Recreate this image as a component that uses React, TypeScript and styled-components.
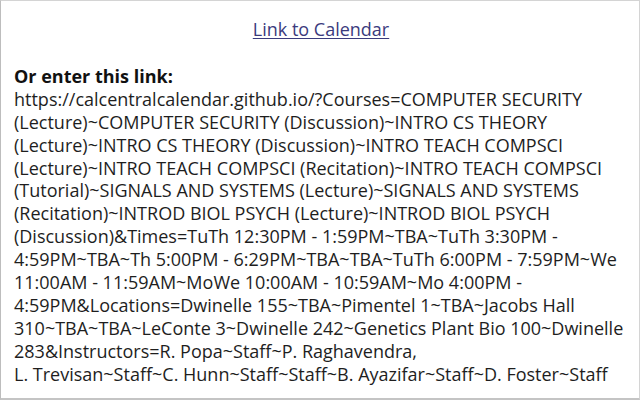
import React from "react";
import styled, { createGlobalStyle } from "styled-components";

const GlobalStyle = createGlobalStyle`
  html, body {
    margin: 0;
    padding: 0;
    background: #ffffff;
  }
  * {
    box-sizing: border-box;
  }
`;

const Popup = styled.div`
  width: 640px;
  height: 400px;
  border: 1px solid #d4d4d4;
  border-left-color: #bdbdbd;
  border-bottom: 2px solid #c4c4c4;
  background: #fff;
  font-family: "Open Sans", "Noto Sans", sans-serif;
  font-size: 18px;
  line-height: 22.9px;
  color: #1e1e1e;
  padding: 17px 11px 0 13px;
  overflow: hidden;
`;

const LinkRow = styled.div`
  display: flex;
  justify-content: center;
`;

const CalendarLink = styled.a`
  color: #3b3b7d;
  text-decoration: underline;
  text-underline-offset: 2px;
  cursor: pointer;
`;

const Section = styled.div`
  margin-top: 24px;
`;

const Label = styled.div`
  font-weight: 700;
  color: #111;
`;

const Url = styled.div`
  overflow-wrap: anywhere;
`;

const url =
  "https://calcentralcalendar.github.io/?Courses=COMPUTER SECURITY (Lecture)~COMPUTER SECURITY (Discussion)~INTRO CS THEORY (Lecture)~INTRO CS THEORY (Discussion)~INTRO TEACH COMPSCI (Lecture)~INTRO TEACH COMPSCI (Recitation)~INTRO TEACH COMPSCI (Tutorial)~SIGNALS AND SYSTEMS (Lecture)~SIGNALS AND SYSTEMS (Recitation)~INTROD BIOL PSYCH (Lecture)~INTROD BIOL PSYCH (Discussion)&Times=TuTh 12:30PM - 1:59PM~TBA~TuTh 3:30PM - 4:59PM~TBA~Th 5:00PM - 6:29PM~TBA~TBA~TuTh 6:00PM - 7:59PM~We 11:00AM - 11:59AM~MoWe 10:00AM - 10:59AM~Mo 4:00PM - 4:59PM&Locations=Dwinelle 155~TBA~Pimentel 1~TBA~Jacobs Hall 310~TBA~TBA~LeConte 3~Dwinelle 242~Genetics Plant Bio 100~Dwinelle 283&Instructors=R.\u00a0Popa~Staff~P.\u00a0Raghavendra, L.\u00a0Trevisan~Staff~C.\u00a0Hunn~Staff~Staff~B.\u00a0Ayazifar~Staff~D.\u00a0Foster~Staff";

export default function App() {
  return (
    <>
      <GlobalStyle />
      <Popup>
        <LinkRow>
          <CalendarLink>Link to Calendar</CalendarLink>
        </LinkRow>
        <Section>
          <Label>Or enter this link:</Label>
          <Url>{url}</Url>
        </Section>
      </Popup>
    </>
  );
}
